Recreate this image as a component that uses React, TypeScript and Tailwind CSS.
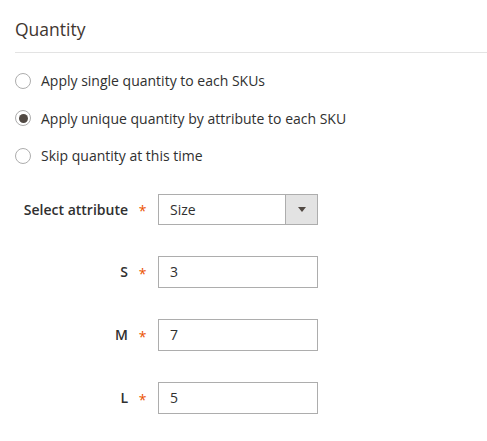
import { useState } from "react"

const options = [
  "Apply single quantity to each SKUs",
  "Apply unique quantity by attribute to each SKU",
  "Skip quantity at this time",
]

const sizes = [
  { label: "S", value: "3" },
  { label: "M", value: "7" },
  { label: "L", value: "5" },
]

function Radio({ checked }: { checked: boolean }) {
  return (
    <span className="flex size-4 shrink-0 items-center justify-center rounded-full border border-[#adadad] bg-white">
      {checked && <span className="size-[9px] rounded-full bg-[#514943]" />}
    </span>
  )
}

function Field({ label, children }: { label: string; children: React.ReactNode }) {
  return (
    <div className="flex items-center">
      <span className="w-[128px] text-right text-[14px] font-semibold text-[#303030]">{label}</span>
      <span className="w-[29px] translate-y-[2px] text-center text-[14px] leading-none text-[#eb5202]">*</span>
      {children}
    </div>
  )
}

export default function App() {
  const [selected, setSelected] = useState(1)

  return (
    <div className="min-h-[441px] w-[487px] bg-white font-['Open_Sans',sans-serif] text-[#303030]">
      <div className="pl-[15px] pt-[17px]">
        <h2 className="border-b border-[#e3e3e3] pb-[10px] text-[17.5px] font-normal leading-[25px] text-[#41362f]">
          Quantity
        </h2>
        <div className="mt-[18px] flex flex-col gap-[18px]">
          {options.map((opt, i) => (
            <label key={opt} className="flex cursor-pointer items-center gap-[10px] text-[14px] leading-[19.5px]" onClick={() => setSelected(i)}>
              <Radio checked={selected === i} />
              {opt}
            </label>
          ))}
        </div>
      </div>
      <div className="mt-[28px] flex flex-col gap-[31px]">
        <Field label="Select attribute">
          <div className="ml-[1px] flex h-[31px] w-[160px] border border-[#adadad] bg-white text-[14px]">
            <span className="flex flex-1 items-center pl-[11px]">Size</span>
            <span className="flex w-[32px] items-center justify-center border-l border-[#adadad] bg-[#e3e3e3]">
              <svg width="8" height="5" viewBox="0 0 8 5">
                <path d="M0 0h8L4 5z" fill="#514943" />
              </svg>
            </span>
          </div>
        </Field>
        {sizes.map((s) => (
          <Field key={s.label} label={s.label}>
            <input
              readOnly
              value={s.value}
              className="ml-[1px] h-[32px] w-[160px] border border-[#adadad] bg-white pl-[11px] text-[14px] text-[#303030] outline-none"
            />
          </Field>
        ))}
      </div>
    </div>
  )
}
